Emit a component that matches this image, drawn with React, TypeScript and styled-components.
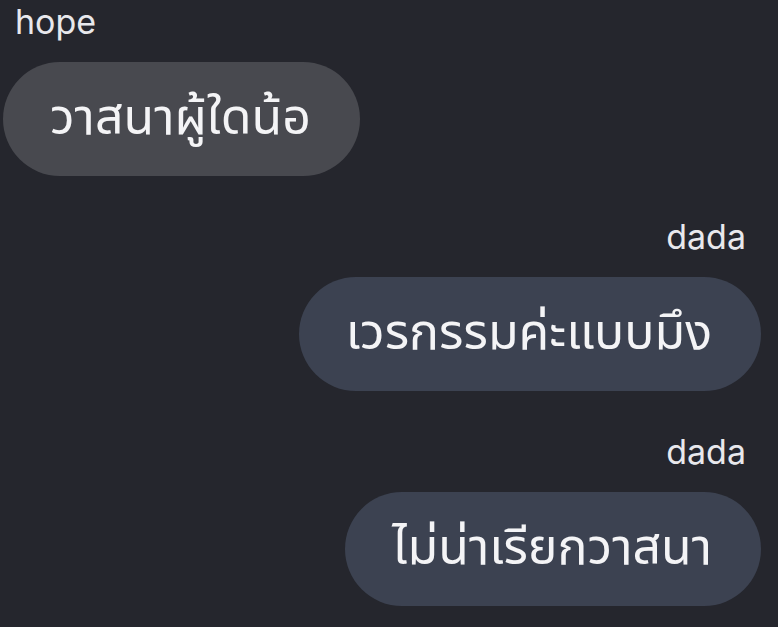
import React from "react";
import styled, { createGlobalStyle } from "styled-components";

const Global = createGlobalStyle`
  html, body { margin: 0; padding: 0; background: #25262d; }
  body { width: 778px; height: 627px; overflow: hidden; }
`;

const Chat = styled.div`
  display: flex;
  flex-direction: column;
  padding: 2px 17px 0 3px;
  font-family: "Noto Sans Thai", "Noto Sans", "DejaVu Sans", sans-serif;
`;

const Group = styled.div<{ $mine?: boolean }>`
  display: flex;
  flex-direction: column;
  align-items: ${(p) => (p.$mine ? "flex-end" : "flex-start")};
  margin-top: ${(p) => (p.$mine ? "41px" : "0")};
`;

const Name = styled.div<{ $mine?: boolean }>`
  font-family: Inter, "Liberation Sans", sans-serif;
  font-size: 34px;
  line-height: 40px;
  color: #e8e8ec;
  padding: ${(p) => (p.$mine ? "0 15px 0 0" : "0 0 0 12px")};
  margin-bottom: 20px;
`;

const Bubble = styled.div<{ $mine?: boolean }>`
  background: ${(p) => (p.$mine ? "#3c4251" : "#48494f")};
  color: #f4f4f6;
  border-radius: 57px;
  height: 114px;
  display: flex;
  align-items: center;
  padding: 0 49px 0 47px;
  font-size: 50px;
  white-space: nowrap;
`;

export default function App() {
  return (
    <>
      <Global />
      <Chat>
        <Group>
          <Name>hope</Name>
          <Bubble>วาสนาผู้ใดน้อ</Bubble>
        </Group>
        <Group $mine>
          <Name $mine>dada</Name>
          <Bubble $mine>เวรกรรมค่ะแบบมึง</Bubble>
        </Group>
        <Group $mine>
          <Name $mine>dada</Name>
          <Bubble $mine>ไม่น่าเรียกวาสนา</Bubble>
        </Group>
      </Chat>
    </>
  );
}
